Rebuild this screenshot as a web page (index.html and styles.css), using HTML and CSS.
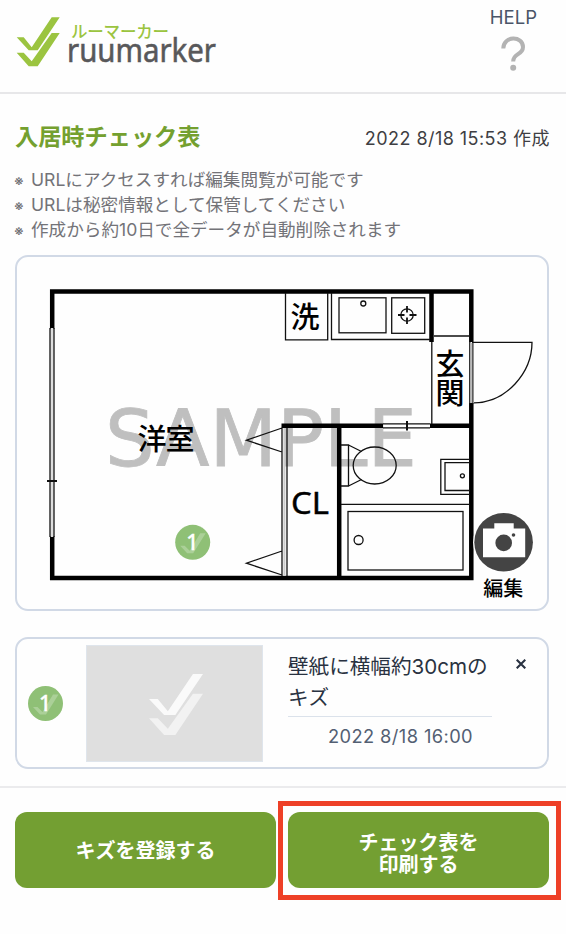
FILE: index.html
```html
<!DOCTYPE html>
<html lang="ja">
<head>
<meta charset="utf-8">
<meta name="viewport" content="width=device-width, initial-scale=1">
<title>入居時チェック表</title>
<link rel="stylesheet" href="styles.css">
</head>
<body>
<svg width="0" height="0" class="defs" aria-hidden="true">
  <defs>
    <g id="checks">
      <path d="M0 20h7l8 10L35 0h8L21 33h-9z"/>
      <path class="second" d="M0 35.500h7l8 8.500L35 15.800h8L21 49h-9z"/>
    </g>
    <g id="marker">
      <circle cx="17.5" cy="17.5" r="17.5" fill="#8fc076"/>
      <path d="M5 21h4.500l5 5L25 8.500h5.500L18 28.500h-6z" fill="#fff" opacity=".25"/>
      <text x="17" y="25" text-anchor="middle" class="marker-number">1</text>
    </g>
  </defs>
</svg>
<header class="header">
  <svg class="logo" width="204" height="60" viewBox="15 14 204 60">
    <use href="#checks" x="16.700" y="17.300" fill="#9bc440"/>
    <text x="71" y="38" class="logo-kana" textLength="98">ルーマーカー</text>
    <text x="67" y="62.300" class="logo-name" textLength="149" lengthAdjust="spacingAndGlyphs">ruumarker</text>
  </svg>
  <a class="help">
    <span>HELP</span>
    <svg width="26" height="36" viewBox="0 0 26 36" fill="none" stroke="#b3b3b3" stroke-width="4">
      <path d="M3.300 12.500C3.300 -.5 23 -.5 23 11C23 19.500 13.200 16.500 13.200 25.500"/>
      <circle cx="13.200" cy="31.800" r="3" fill="#b3b3b3" stroke="none"/>
    </svg>
  </a>
</header>
<main class="main">
  <div class="heading">
    <h1>入居時チェック表</h1>
    <time>2022 8/18 15:53 作成</time>
  </div>
  <ul class="notes">
    <li><span>※</span>URLにアクセスすれば編集閲覧が可能です</li>
    <li><span>※</span>URLは秘密情報として保管してください</li>
    <li><span>※</span>作成から約10日で全データが自動削除されます</li>
  </ul>
  <section class="card plan">
    <svg width="530" height="352" viewBox="17 257 530 352" fill="none" stroke="#111" stroke-width="1.300">
      <text x="105" y="466" class="sample" textLength="312" lengthAdjust="spacingAndGlyphs">SAMPLE</text>
      <!-- outer walls and windows -->
      <g stroke="#000" stroke-width="4.500">
        <path d="M52.200 329V291.600H471.300V342M471.300 403V577.900H52.200V536"/>
        <path d="M281.500 425.800H383M430 425.800H471M339.200 426V577M431.500 292V342"/>
      </g>
      <path d="M52 328V537" stroke="#ddd" stroke-width="3"/>
      <path d="M50 328V537M54 328V537"/>
      <path d="M47 481H57" stroke-width="2"/>
      <path d="M469.800 342V404M472.800 342V404"/>
      <path d="M471.300 343V403" stroke="#bbb" stroke-width="2"/>
      <path d="M383 423.800H430M383 427.800H430"/>
      <path d="M407 421V430.500" stroke-width="2"/>
      <!-- kitchen and entrance -->
      <path d="M285.500 293V339.800H327.700V293M331.500 293V339.500H430M434 336H470M431.800 342V424"/>
      <rect x="339" y="297.800" width="47" height="35"/>
      <circle cx="363.300" cy="303.500" r="2.500"/>
      <rect x="391.700" y="297.800" width="33" height="35.500"/>
      <circle cx="407" cy="315" r="6.200"/>
      <path d="M398 315H404.500M409.500 315H416.500M407 306V312.500M407 317.500V324" stroke-width="1.800"/>
      <path d="M472 342.300H532C532 373 506 402.500 474 402.800"/>
      <!-- closet -->
      <path d="M282 428V576M287 428V576M282 428L246.500 440.200L282 452M282 551L246.500 563.200L282 575"/>
      <path d="M284.400 428V576" stroke="#ccc" stroke-width="2"/>
      <!-- bathroom -->
      <path d="M341 445H348.500V486H341M348.500 445L361.500 451.500M348.500 486L361.500 479.500M341 504.300H470"/>
      <ellipse cx="374.700" cy="465.500" rx="21.500" ry="18.500"/>
      <path d="M470 459.300H440.800V494.300H470M470 462.600H445V490.500H470"/>
      <circle cx="462.400" cy="475.800" r="2"/>
      <rect x="348" y="511.500" width="115" height="58.500"/>
      <circle cx="358.600" cy="540" r="4.500"/>
      <g class="rooms">
        <text x="290.500" y="328">洗</text>
        <text x="435.500" y="375">玄</text>
        <text x="435.500" y="403.500">関</text>
        <text x="137.500" y="449.500" textLength="57">洋室</text>
        <text x="291" y="514" class="closet" textLength="38" lengthAdjust="spacingAndGlyphs">CL</text>
      </g>
      <use href="#marker" x="175.200" y="524.800" stroke="none"/>
      <g stroke="none">
        <circle cx="503.600" cy="542.200" r="30.500" fill="#fff"/>
        <circle cx="503.600" cy="542.200" r="29.300" fill="#444"/>
        <path d="M483 528.500h11.300v-5.200h19.400v5.200H525.200V557.300H483z" fill="#fff"/>
        <circle cx="503.700" cy="542.900" r="8.300" fill="#444"/>
        <circle cx="513.500" cy="535" r="1.800" fill="#444"/>
        <text x="503.300" y="595.500" text-anchor="middle" class="edit">編集</text>
      </g>
    </svg>
  </section>
  <section class="card item">
    <svg class="pin" width="35" height="35" viewBox="0 0 35 35"><use href="#marker"/></svg>
    <div class="photo">
      <svg class="pale" width="54" height="61" viewBox="0 0 43 49" preserveAspectRatio="none" fill="#fafafa"><use href="#checks"/></svg>
    </div>
    <div class="detail">
      <p>壁紙に横幅約30cmのキズ</p>
      <time>2022 8/18 16:00</time>
    </div>
    <button class="close" aria-label="削除">
      <svg width="10" height="10" viewBox="0 0 10 10" stroke="#293241" stroke-width="2.100"><path d="M.7.7l8.600 8.600M9.300.7L.7 9.300"/></svg>
    </button>
  </section>
</main>
<footer class="footer">
  <button class="action">キズを登録する</button>
  <div class="highlight"><button class="action two-line">チェック表を<br>印刷する</button></div>
</footer>
</body>
</html>
```

FILE: styles.css
```css
* { box-sizing: border-box; }
body {
  margin: 0;
  height: 934px;
  background: #fefefe;
  color: #293241;
  font-family: Inter, "Noto Sans CJK JP", sans-serif;
  display: flex;
  flex-direction: column;
  overflow: hidden;
}
svg { display: block; flex: none; }
.defs { position: absolute; }
.header {
  height: 94px;
  flex: none;
  padding: 7px 29px 0 15px;
  display: flex;
  justify-content: space-between;
  border-bottom: 2px solid #e7e7e9;
}
.logo { margin-top: 7px; overflow: visible; }
.logo-kana { font: 500 16.5px "Noto Sans CJK JP", sans-serif; fill: #9bc440; }
.logo-name { font: 400 33px "Noto Sans", sans-serif; fill: #58585a; stroke: #58585a; stroke-width: .6px; }
.help {
  display: flex;
  flex-direction: column;
  align-items: center;
  gap: 9px;
  color: #4a5568;
  font-size: 18.5px;
  line-height: 20px;
}
.main { padding: 29px 17px 0 15px; height: 692px; flex: none; }
.heading {
  display: flex;
  justify-content: space-between;
  align-items: center;
  height: 29px;
}
h1 { margin: 0; color: #74a02f; font-size: 23.2px; line-height: 29px; font-weight: 700; white-space: nowrap; }
.heading time { font-size: 18px; line-height: 28px; padding-top: 3px; color: #3f3f43; letter-spacing: .45px; white-space: nowrap; margin-right: -1px; }
.notes {
  list-style: none;
  padding: 0;
  margin: 15px 0 13px;
  color: #737378;
  font-size: 17.6px;
  line-height: 25px;
}
.notes li { display: flex; height: 25px; white-space: nowrap; }
.notes span { width: 16px; font-size: 14px; font-weight: 500; padding-top: 1px; margin-left: -1px; margin-right: 1px; }
.card { border: 2px solid #d1d9e6; border-radius: 13px; }
.plan { height: 356px; }
.sample { font: 79px "DejaVu Sans", sans-serif; fill: #bfbfbf; stroke: #bfbfbf; stroke-width: .8px; }
.rooms { font: 500 29px "Noto Sans CJK JP", sans-serif; fill: #000; stroke: none; }
.closet { font: 30px "Noto Sans", sans-serif; stroke: #000; stroke-width: .4px; }
.edit { font: 500 20px "Noto Sans CJK JP", sans-serif; fill: #000; }
.marker-number { font: 500 21px "Noto Sans", sans-serif; fill: #fff; stroke: #fff; stroke-width: .3px; }
.second { opacity: var(--second-opacity, 1); }
.item {
  height: 132px;
  margin-top: 26px;
  padding: 6px 20px 6px 11px;
  display: flex;
  align-items: flex-start;
}
.pin { margin-top: 41px; }
.photo {
  width: 177px;
  height: 117px;
  margin-left: 23px;
  display: flex;
  align-items: center;
  justify-content: center;
  background: #dfdfdf;
  border: 1px solid #dfe5ec;
}
.pale { margin: 1px 0 0 2px; --second-opacity: .7; }
.detail { width: 204px; margin-left: 25px; padding-top: 5px; }
.detail p { margin: 0; height: 67px; font-size: 20.6px; line-height: 31px; padding-top: 1px; border-bottom: 1px solid #dbe2eb; }
.detail time { display: block; padding: 6px 19px 0 0; text-align: right; font-size: 18.3px; line-height: 26px; letter-spacing: .4px; color: #535f73; }
.close { padding: 0; border: 0; background: none; margin: 14px 0 0 24px; }
.footer {
  height: 148px;
  flex: none;
  padding: 14px 5px 0 15px;
  display: flex;
  gap: 2px;
  border-top: 2px solid #ebebed;
}
.action {
  width: 261px;
  height: 76px;
  margin: 10px 0 0;
  padding: 0;
  border: 0;
  border-radius: 12px;
  background: #739f32;
  color: #fff;
  font: 700 20px/22px "Noto Sans CJK JP", sans-serif;
}
.highlight { width: 283px; height: 99px; border: 5px solid #ee4027; margin-top: -1px; }
.highlight .action { margin: 6px 0 0 5px; }
.two-line { padding-top: 6px; }
```
